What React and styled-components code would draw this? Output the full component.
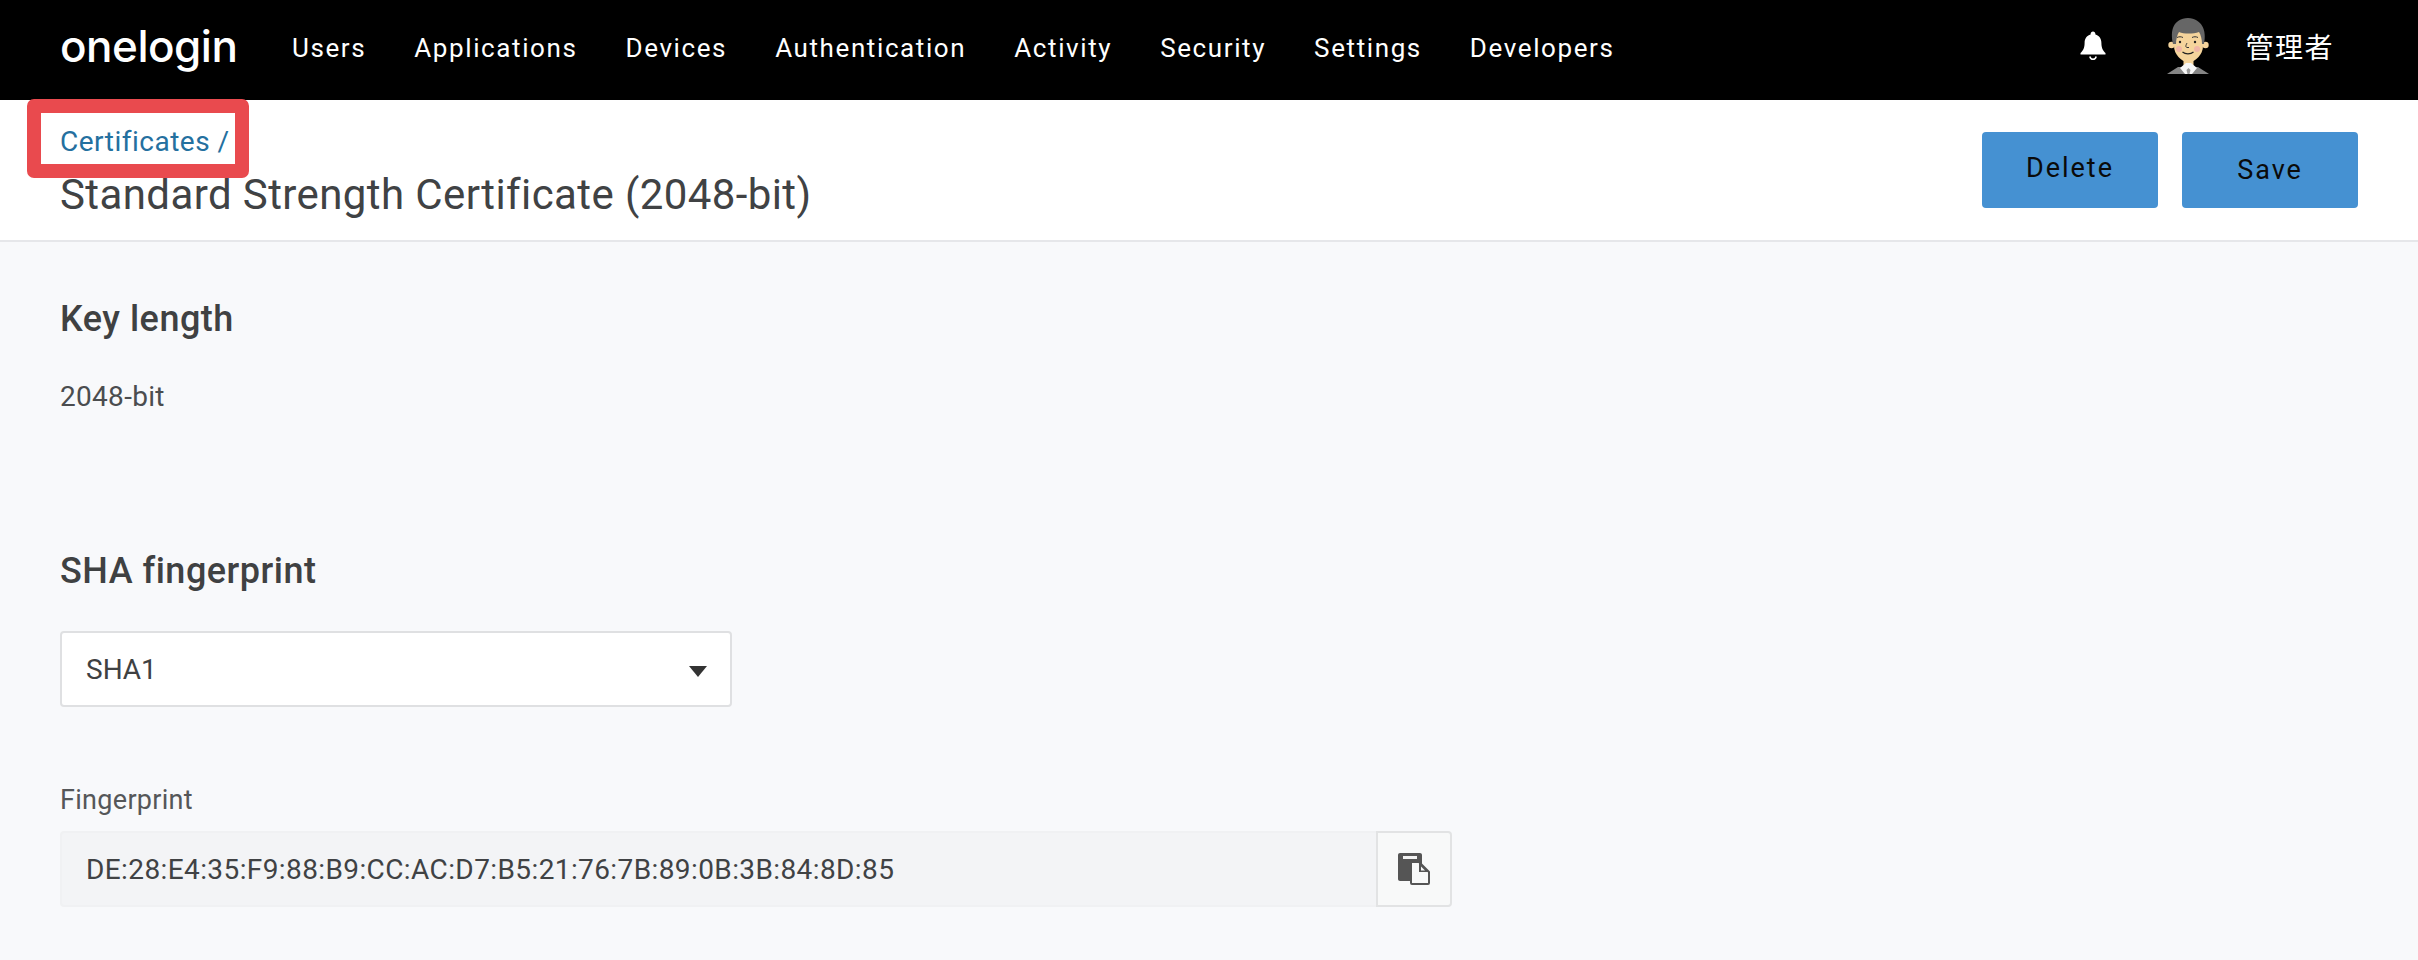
import React from "react";
import styled, { createGlobalStyle } from "styled-components";

const GlobalStyle = createGlobalStyle`
  html, body {
    margin: 0;
    height: 100%;
    overflow: hidden;
    background: #f8f9fb;
    font-family: Roboto, "Noto Sans CJK JP", sans-serif;
  }
  * {
    box-sizing: border-box;
  }
`;

const TopBar = styled.header`
  height: 100px;
  background: #000;
  display: flex;
  align-items: center;
  padding: 0 60px;
  color: #fff;
`;

const Logo = styled.div`
  width: 178px;
  margin-right: 54px;
  font-family: Inter, sans-serif;
  font-size: 44px;
  font-weight: 500;
  letter-spacing: -0.5px;
  line-height: 1;
  margin-top: -8px;
  white-space: nowrap;
`;

const Nav = styled.nav`
  display: flex;
  gap: 48px;
`;

const NavItem = styled.a`
  font-size: 26px;
  letter-spacing: 1.6px;
  color: #fff;
  margin-top: -4px;
`;

const UserArea = styled.div`
  margin-left: auto;
  display: flex;
  align-items: center;
  margin-right: 24px;
  margin-top: -8px;
`;

const BellWrap = styled.div`
  display: flex;
  margin-right: 60px;
`;

const UserName = styled.span`
  margin-left: 35px;
  font-size: 28px;
  letter-spacing: 1.5px;
  font-family: "Noto Sans CJK JP", sans-serif;
`;

const SubHeader = styled.section`
  height: 142px;
  background: #fff;
  border-bottom: 2px solid #e6e7ea;
  padding: 0 60px;
  display: flex;
  justify-content: space-between;
`;

const TitleBlock = styled.div`
  padding-top: 26px;
`;

const Crumb = styled.div`
  position: relative;
  font-size: 28px;
  letter-spacing: 0.5px;
  line-height: 32px;
  color: #24709f;
`;

const CrumbMark = styled.div`
  position: absolute;
  left: -33px;
  top: -27px;
  width: 222px;
  height: 79px;
  border: 14px solid #e94a4e;
  border-radius: 7px;
`;

const Title = styled.h1`
  margin: 11px 0 0;
  font-size: 42px;
  letter-spacing: 0.4px;
  font-weight: 400;
  line-height: 52px;
  color: #404244;
`;

const Actions = styled.div`
  display: flex;
  gap: 24px;
  padding-top: 32px;
`;

const ActionButton = styled.button`
  width: 176px;
  height: 76px;
  border: none;
  border-radius: 4px;
  background: #4591d2;
  color: #0a0a0a;
  font-family: inherit;
  font-size: 27px;
  letter-spacing: 2px;
  padding: 0 0 ${(p) => (p.$raised ? "5px" : "0")};
`;

const Content = styled.main`
  padding: 0 60px;
  display: flex;
  flex-direction: column;
`;

const SectionTitle = styled.h2`
  margin: 0;
  font-size: 36px;
  letter-spacing: 0.5px;
  font-weight: 500;
  line-height: 44px;
  color: #3f4142;
`;

const KeyTitle = styled(SectionTitle)`
  margin-top: 55px;
`;

const ShaTitle = styled(SectionTitle)`
  margin-top: 135px;
`;

const ValueText = styled.p`
  margin: 39px 0 0;
  font-size: 28px;
  letter-spacing: 0.3px;
  line-height: 34px;
  color: #4b4d4f;
`;

const SelectBox = styled.div`
  margin-top: 38px;
  width: 672px;
  height: 76px;
  background: #fff;
  border: 2px solid #dfe0e2;
  border-radius: 4px;
  padding: 0 24px;
  display: flex;
  align-items: center;
  justify-content: space-between;
  font-size: 28px;
  color: #3f4142;
`;

const Caret = styled.span`
  width: 0;
  height: 0;
  border-left: 9px solid transparent;
  border-right: 9px solid transparent;
  border-top: 11px solid #333;
  margin-top: 4px;
  margin-right: -1px;
`;

const FieldLabel = styled.label`
  display: block;
  margin-top: 77px;
  font-size: 27px;
  letter-spacing: 0.3px;
  line-height: 32px;
  color: #555759;
`;

const FieldRow = styled.div`
  margin-top: 15px;
  display: flex;
  width: 1392px;
  height: 76px;
`;

const FieldValue = styled.div`
  flex: 1;
  background: #f3f4f6;
  border: 2px solid #f0f1f3;
  border-right: none;
  border-radius: 4px 0 0 4px;
  padding: 0 24px;
  display: flex;
  align-items: center;
  font-size: 28px;
  letter-spacing: 0.4px;
  color: #404244;
`;

const CopyButton = styled.button`
  width: 76px;
  border: 2px solid #e2e3e4;
  border-radius: 0 4px 4px 0;
  background: #f8f9f9;
  padding: 0;
  display: flex;
  align-items: center;
  justify-content: center;
`;

const BellIcon = () => (
  <svg width="26" height="30" viewBox="0 0 26 30">
    <path
      fill="#fff"
      d="M13 0.5c1.4 0 2.4 1 2.4 2.4v0.7c3.9 1 6 4.3 6 8.300c0 5.500 1.800 7.500 4.100 10.100v1.500h-25v-1.500c2.300-2.600 4.100-4.600 4.100-10.100 0-4 2.100-7.300 6-8.300v-0.700c0-1.400 1-2.400 2.400-2.400z"
    />
    <path fill="none" stroke="#fff" strokeWidth="1.500" d="M9.800 25.500c0.500 1.800 1.700 2.800 3.200 2.800s2.700-1 3.200-2.800" />
  </svg>
);

const Avatar = () => (
  <svg width="44" height="56" viewBox="0 0 44 56">
    <path fill="#858585" d="M1 56l11-7h20l11 7z" />
    <rect x="17.500" y="40" width="10" height="8" fill="#f5d49c" />
    <path fill="#f7f7f7" d="M14 50l6-5h5l6 5-5 6h-7z" />
    <path fill="#9a9a9a" d="M20.500 52l2-2 2 2-1 4h-2z" />
    <circle cx="5.500" cy="27" r="3.200" fill="#f5d49c" />
    <circle cx="39.500" cy="27" r="3.200" fill="#f5d49c" />
    <path fill="#f5d49c" d="M8 14h29v14c0 8-7 16-14.500 16S8 36 8 28z" />
    <path fill="#666" d="M7 26C4 12 7 1 22 0c14 1 19 12 16 26h-2c0-4-1-9-3-12-6 2-15 2-20 0-2 3-3 8-3 12z" />
    <circle cx="13" cy="31" r="3" fill="#f0b6a6" />
    <circle cx="31" cy="31" r="3" fill="#f0b6a6" />
    <circle cx="14" cy="24" r="1.200" fill="#222" />
    <circle cx="29" cy="24" r="1.200" fill="#222" />
    <path fill="none" stroke="#333" strokeWidth="1" d="M11 19.500c2-1 4-1 6 0M26 19.500c2-1 4-1 6 0M21 25c-1 2-2 4 0 4.500h2" />
    <path fill="none" stroke="#222" strokeWidth="1.200" d="M16.500 34c3 2.500 8 2.500 11 0" />
  </svg>
);

const CopyIcon = () => (
  <svg width="32" height="32" viewBox="0 0 32 32">
    <path fill="#555" d="M2 0h20c1.100 0 2 0.900 2 2v26H2c-1.100 0-2-0.900-2-2V2C0 0.900 0.900 0 2 0z" />
    <rect x="5" y="3" width="14" height="3" fill="#f3f3f3" />
    <path fill="#f8f9f9" stroke="#555" strokeWidth="2" strokeLinejoin="round" d="M13 9h8l10 10v11c0 0.600-0.400 1-1 1H14c-0.600 0-1-0.400-1-1z" />
    <path fill="#555" d="M21 9l10 10H21z" />
    <path fill="#f8f9f9" d="M23 13.500l4 4h-4z" />
  </svg>
);

const navItems = ["Users", "Applications", "Devices", "Authentication", "Activity", "Security", "Settings", "Developers"];

const App = () => (
  <>
    <GlobalStyle />
    <TopBar>
      <Logo>onelogin</Logo>
      <Nav>
        {navItems.map((item) => (
          <NavItem key={item}>{item}</NavItem>
        ))}
      </Nav>
      <UserArea>
        <BellWrap>
          <BellIcon />
        </BellWrap>
        <Avatar />
        <UserName>管理者</UserName>
      </UserArea>
    </TopBar>
    <SubHeader>
      <TitleBlock>
        <Crumb>
          Certificates /
          <CrumbMark />
        </Crumb>
        <Title>Standard Strength Certificate (2048-bit)</Title>
      </TitleBlock>
      <Actions>
        <ActionButton $raised>Delete</ActionButton>
        <ActionButton>Save</ActionButton>
      </Actions>
    </SubHeader>
    <Content>
      <KeyTitle>Key length</KeyTitle>
      <ValueText>2048-bit</ValueText>
      <ShaTitle>SHA fingerprint</ShaTitle>
      <SelectBox>
        SHA1
        <Caret />
      </SelectBox>
      <FieldLabel>Fingerprint</FieldLabel>
      <FieldRow>
        <FieldValue>DE:28:E4:35:F9:88:B9:CC:AC:D7:B5:21:76:7B:89:0B:3B:84:8D:85</FieldValue>
        <CopyButton>
          <CopyIcon />
        </CopyButton>
      </FieldRow>
    </Content>
  </>
);

export default App;
